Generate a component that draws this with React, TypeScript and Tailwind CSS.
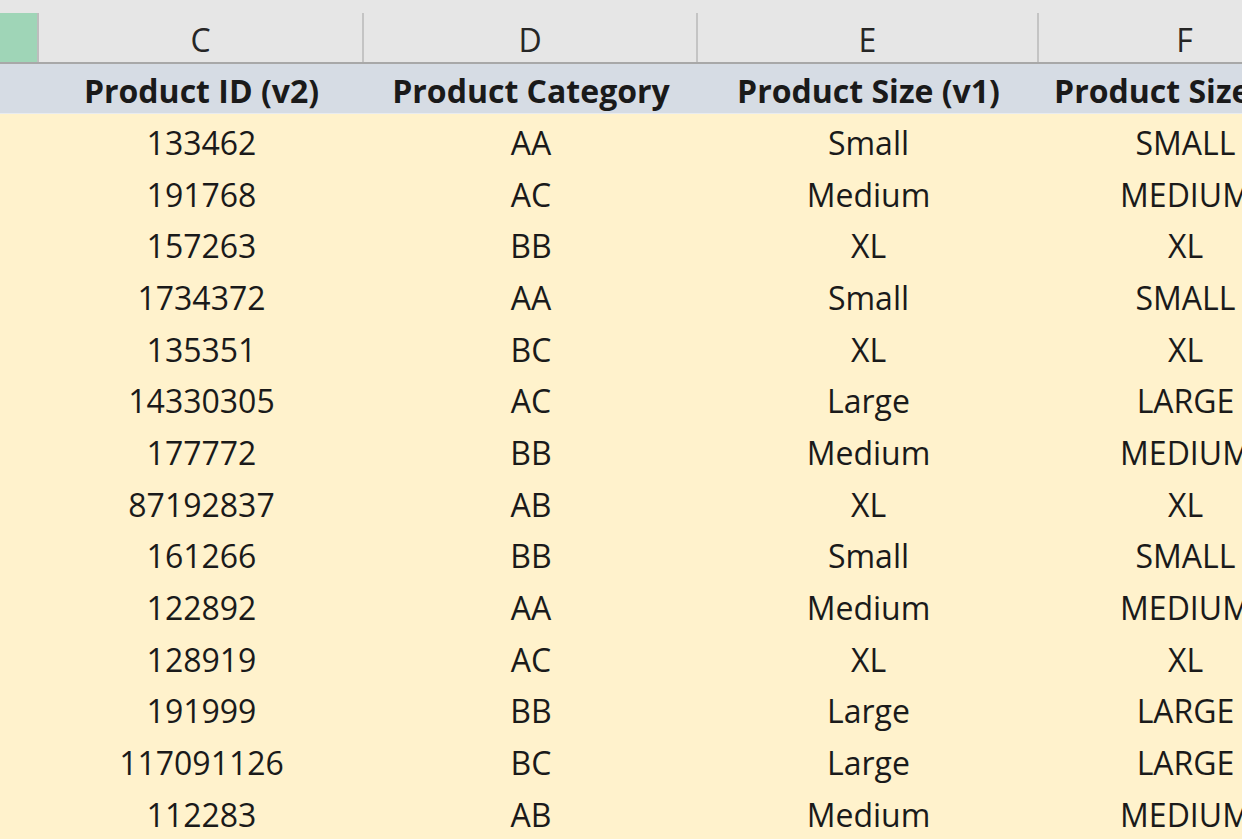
import React from "react";

const rows: [string, string, string, string][] = [
  ["133462", "AA", "Small", "SMALL"],
  ["191768", "AC", "Medium", "MEDIUM"],
  ["157263", "BB", "XL", "XL"],
  ["1734372", "AA", "Small", "SMALL"],
  ["135351", "BC", "XL", "XL"],
  ["14330305", "AC", "Large", "LARGE"],
  ["177772", "BB", "Medium", "MEDIUM"],
  ["87192837", "AB", "XL", "XL"],
  ["161266", "BB", "Small", "SMALL"],
  ["122892", "AA", "Medium", "MEDIUM"],
  ["128919", "AC", "XL", "XL"],
  ["191999", "BB", "Large", "LARGE"],
  ["117091126", "BC", "Large", "LARGE"],
  ["112283", "AB", "Medium", "MEDIUM"],
];

const grid = "grid grid-cols-[39px_325px_334px_341px_293px]";

export default function App() {
  return (
    <div
      className="w-[1242px] h-[839px] overflow-hidden bg-[#fff2cc] text-[#1a1a1a]"
      style={{ fontFamily: '"Open Sans", "Noto Sans", sans-serif' }}
    >
      {/* Column letters */}
      <div className="bg-[#e6e6e6] pt-[13px] border-b-2 border-[#a8a8a8] w-[1332px]">
        <div className={`${grid} h-[49px] text-[32px] text-[#262626]`}>
          <div className="bg-[#9fd5b7] border-r-2 border-[#bdbdbd]" />
          {["C", "D", "E", "F"].map((l) => (
            <div
              key={l}
              className="flex items-center justify-center pt-[5px] border-r-2 border-[#c4c4c4] leading-none"
            >
              {l}
            </div>
          ))}
        </div>
      </div>

      {/* Title row */}
      <div className={`${grid} w-[1332px] h-[50px] bg-[#d6dce4] border-b border-[#e9ecef] text-[32px] font-bold`}>
        <div />
        {["Product ID (v2)", "Product Category", "Product Size (v1)", "Product Size (v2)"].map((t) => (
          <div key={t} className="flex items-center justify-center pt-[5px] whitespace-nowrap leading-none">
            {t}
          </div>
        ))}
      </div>

      {/* Data rows */}
      <div className="w-[1332px]">
        {rows.map((r, i) => (
          <div key={i} className={`${grid} h-[51.7px] text-[32px]`}>
            <div />
            {r.map((c, j) => (
              <div key={j} className="flex items-center justify-center pt-[6px] whitespace-nowrap leading-none">
                {c}
              </div>
            ))}
          </div>
        ))}
      </div>
    </div>
  );
}
